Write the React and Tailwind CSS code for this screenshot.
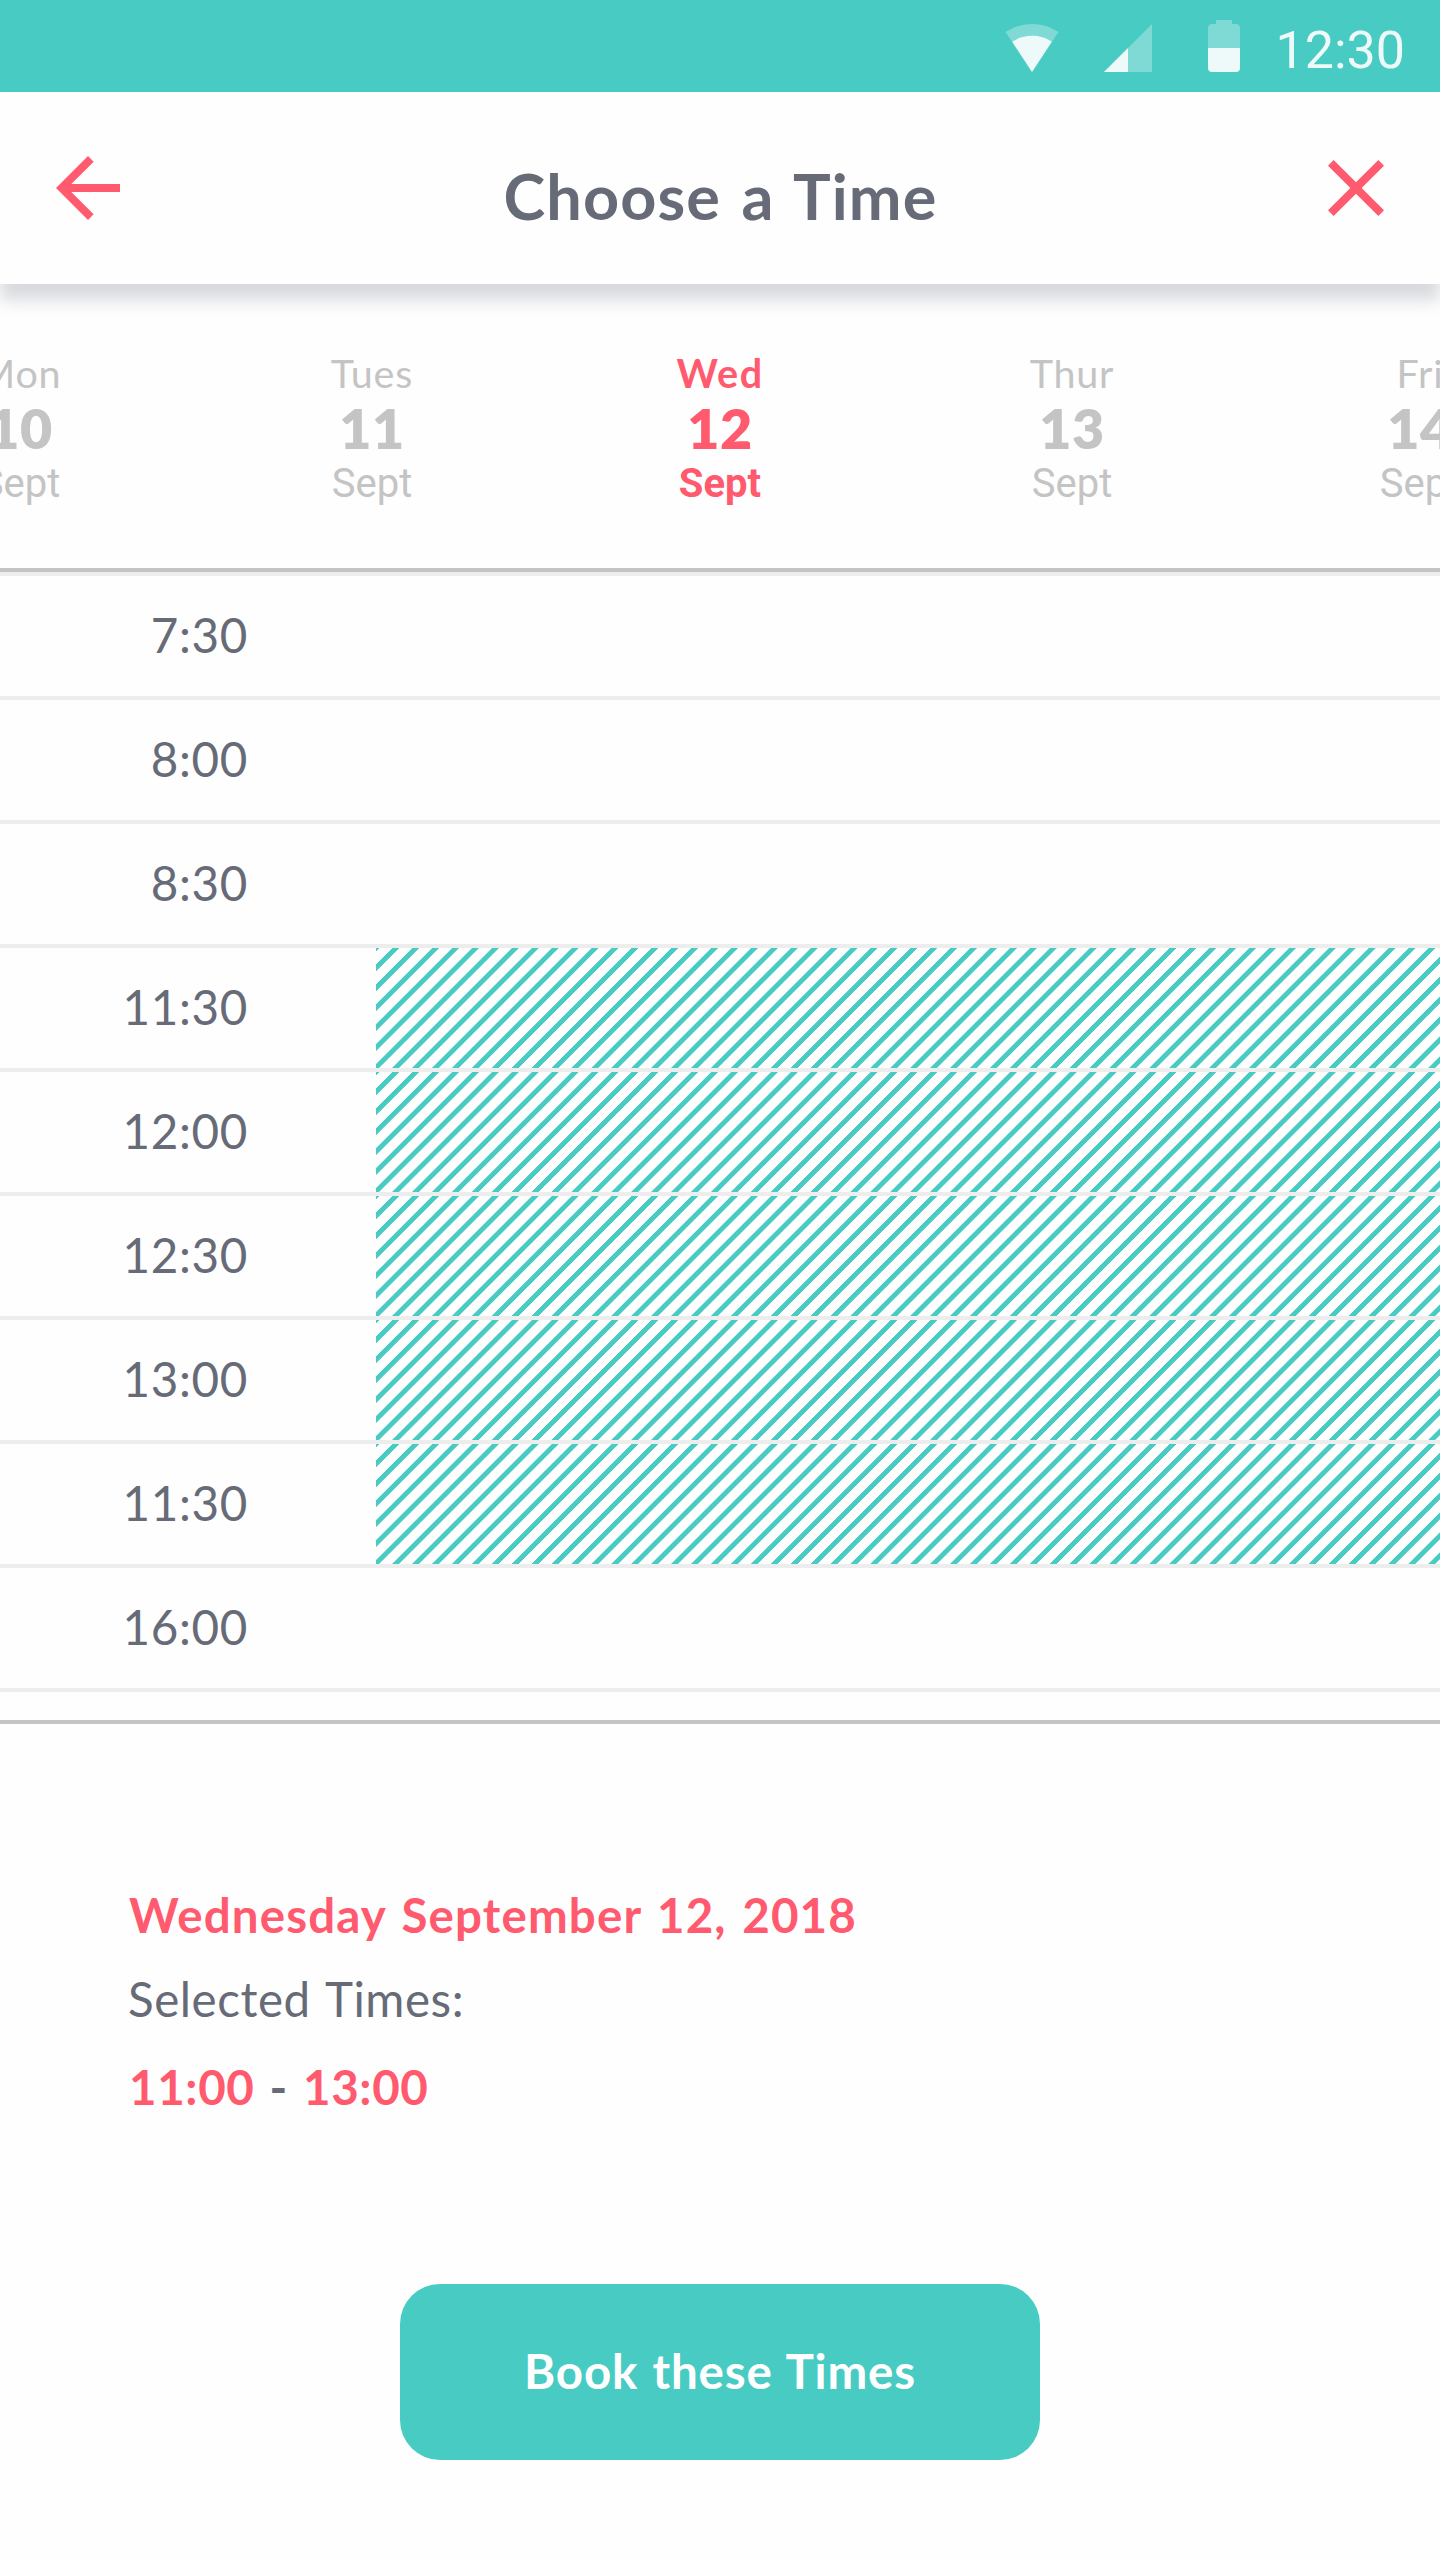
const days = [
  { day: "Mon", date: "10", month: "Sept" },
  { day: "Tues", date: "11", month: "Sept" },
  { day: "Wed", date: "12", month: "Sept", active: true },
  { day: "Thur", date: "13", month: "Sept" },
  { day: "Fri", date: "14", month: "Sept" },
];

const slots = [
  { time: "7:30" },
  { time: "8:00" },
  { time: "8:30" },
  { time: "11:30", open: true },
  { time: "12:00", open: true },
  { time: "12:30", open: true },
  { time: "13:00", open: true },
  { time: "11:30", open: true },
  { time: "16:00" },
];

function StatusBar() {
  return (
    <div className="flex h-[92px] items-center justify-end bg-[#48cbc3] pr-[35px]">
      <svg className="h-[52px] w-[54px] shrink-0 mt-1" viewBox="0 0 54 52" fill="#fff">
        <path fillOpacity="0.3" d="M27 50 L0.5 10 A48 48 0 0 1 53.5 10 Z" />
        <path fillOpacity="0.86" d="M27 50 L7.2 19.8 A36 36 0 0 1 46.8 19.8 Z" />
      </svg>
      <svg className="ml-[45px] h-12 w-12 shrink-0 mt-1" viewBox="0 0 48 48" fill="#fff">
        <path fillOpacity="0.3" d="M0 48 L48 0 V48 Z" />
        <path fillOpacity="0.86" d="M0 48 L24 24 V48 Z" />
      </svg>
      <svg className="ml-14 h-[52px] w-8 shrink-0" viewBox="0 0 32 52" fill="#fff">
        <path fillOpacity="0.3" d="M8 0 H24 V4 H28 A4 4 0 0 1 32 8 V28 H0 V8 A4 4 0 0 1 4 4 H8 Z" />
        <path fillOpacity="0.9" d="M0 28 H32 V48 A4 4 0 0 1 28 52 H4 A4 4 0 0 1 0 48 Z" />
      </svg>
      <span className="ml-9 pt-[9px] font-['Roboto',sans-serif] text-[52px] leading-[60px] text-white/90">12:30</span>
    </div>
  );
}

function Header() {
  return (
    <header className="relative z-10 flex h-48 items-start justify-between bg-[#fefefe] px-9 pt-12 shadow-[0_16px_16px_rgba(99,107,123,0.25)]">
      <button className="ml-1">
        <svg className="h-24 w-24" viewBox="0 0 24 24" fill="#ff5a6e">
          <path d="M20 11H7.83l5.59-5.59L12 4l-8 8 8 8 1.41-1.41L7.83 13H20v-2z" />
        </svg>
      </button>
      <h1 className="pt-4 pr-[3px] text-[63px] leading-[80px] font-bold tracking-[1.1px] text-[#666b77] [word-spacing:4px]">
        Choose a Time
      </h1>
      <button>
        <svg className="h-24 w-24" viewBox="0 0 24 24" fill="#ff5a6e">
          <path d="M19 6.41L17.59 5 12 10.59 6.41 5 5 6.41 10.59 12 5 17.59 6.41 19 12 13.41 17.59 19 19 17.59 13.41 12z" />
        </svg>
      </button>
    </header>
  );
}

function DayPicker() {
  return (
    <div className="h-[284px] overflow-hidden">
      <div className="-ml-[156px] grid w-[1744px] grid-cols-[352px_352px_344px_360px_336px] pt-[65px] text-center">
        {days.map((d) => (
          <div key={d.date} className={d.active ? "text-[#ff5a6e]" : "text-[#c4c4c4]"}>
            <div
              className={
                d.active
                  ? "text-[39.5px] leading-[48px] font-bold tracking-[1.5px]"
                  : "text-[39.5px] leading-[48px] tracking-[0.8px]"
              }
            >
              {d.day}
            </div>
            <div className="pt-px text-[55.5px] leading-[60px] font-extrabold tracking-[0.6px]">{d.date}</div>
            <div
              className={
                d.active
                  ? "pt-0.5 font-['Roboto',sans-serif] text-[40px] leading-[48px] font-bold"
                  : "pt-0.5 font-['Roboto',sans-serif] text-[40px] leading-[48px]"
              }
            >
              {d.month}
            </div>
          </div>
        ))}
      </div>
    </div>
  );
}

function TimeTable() {
  return (
    <div className="h-[1156px] border-y-4 border-[#c4c4c4]">
      <div className="border-t-4 border-[#ededed]">
        {slots.map((s, i) => (
          <div key={i} className="flex h-[124px] border-b-4 border-[#ededed]">
            <div className="w-[248px] pt-[17px] text-right text-[47.5px] leading-[84px] tracking-[0.7px] text-[#666b77]">
              {s.time}
            </div>
            {s.open && (
              <div className="ml-[128px] flex-1 bg-[repeating-linear-gradient(135deg,#48cbc3_0px,#48cbc3_2.1px,#fefefe_2.8px,#fefefe_11.29px,#48cbc3_11.99px,#48cbc3_14.09px)]" />
            )}
          </div>
        ))}
      </div>
    </div>
  );
}

function Summary() {
  return (
    <section className="flex flex-col px-32 pt-[149px] text-[47.5px] leading-[84px] text-[#666b77] [word-spacing:3px]">
      <div className="pl-px font-bold tracking-[1.13px] text-[#ff5a6e]">Wednesday September 12, 2018</div>
      <div className="tracking-[0.55px]">Selected Times:</div>
      <div className="mt-1 pl-px font-bold tracking-[0.6px] text-[#ff5a6e]">
        11:00 <span className="text-[#666b77]">-</span> 13:00
      </div>
      <button className="mt-[155px] h-44 w-[640px] self-center rounded-[40px] bg-[#48cbc3] pb-0.5 font-bold tracking-[0.8px] text-white [word-spacing:2px]">
        Book these Times
      </button>
    </section>
  );
}

export default function App() {
  return (
    <main className="h-[2560px] w-[1440px] overflow-hidden bg-[#fefefe] font-['Lato',sans-serif]">
      <StatusBar />
      <Header />
      <DayPicker />
      <TimeTable />
      <Summary />
    </main>
  );
}
